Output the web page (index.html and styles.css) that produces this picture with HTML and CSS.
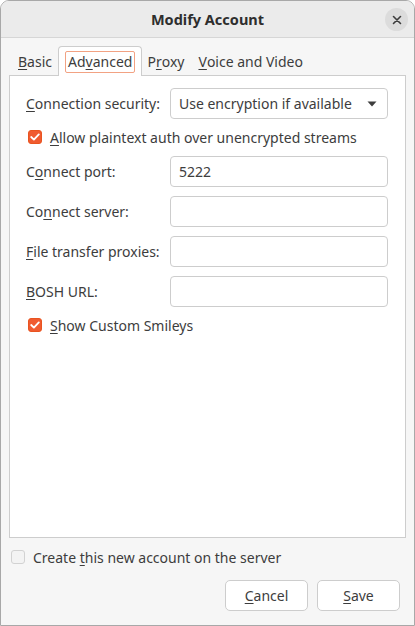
FILE: index.html
```html
<!DOCTYPE html>
<html lang="en">
<head>
    <meta charset="UTF-8">
    <meta name="viewport" content="width=device-width, initial-scale=1.0">
    <title>Modify Account</title>
    <link rel="stylesheet" href="styles.css">
</head>
<body>
    <div class="window">
        <div class="titlebar">
            <span class="title">Modify Account</span>
            <button class="close" aria-label="Close">
                <svg width="10" height="10" viewBox="0 0 10 10"><path d="M1.5 1.5 L8.5 8.5 M8.5 1.5 L1.5 8.5" stroke="#3d3d3d" stroke-width="1.6" stroke-linecap="round"/></svg>
            </button>
        </div>

        <div class="content">
            <div class="tabs">
                <div class="tab"><u>B</u>asic</div>
                <div class="tab active"><span class="focus">Ad<u>v</u>anced</span></div>
                <div class="tab">P<u>r</u>oxy</div>
                <div class="tab"><u>V</u>oice and Video</div>
            </div>

            <div class="page">
                <div class="form">
                    <label><u>C</u>onnection security:</label>
                    <div class="combo">
                        <span>Use encryption if available</span>
                        <svg width="10" height="6" viewBox="0 0 10 6"><path d="M0.5 0.5 H9.5 L5 5.5 Z" fill="#3d3d3d"/></svg>
                    </div>

                    <div class="check-row">
                        <span class="check on"><svg width="10" height="8" viewBox="0 0 10 8"><path d="M1.2 4 L3.9 6.6 L8.8 1.4" fill="none" stroke="#fff" stroke-width="1.8" stroke-linecap="round" stroke-linejoin="round"/></svg></span>
                        <span><u>A</u>llow plaintext auth over unencrypted streams</span>
                    </div>

                    <label>C<u>o</u>nnect port:</label>
                    <div class="entry">5222</div>

                    <label>Co<u>n</u>nect server:</label>
                    <div class="entry"></div>

                    <label><u>F</u>ile transfer proxies:</label>
                    <div class="entry"></div>

                    <label><u>B</u>OSH URL:</label>
                    <div class="entry"></div>

                    <div class="check-row">
                        <span class="check on"><svg width="10" height="8" viewBox="0 0 10 8"><path d="M1.2 4 L3.9 6.6 L8.8 1.4" fill="none" stroke="#fff" stroke-width="1.8" stroke-linecap="round" stroke-linejoin="round"/></svg></span>
                        <span><u>S</u>how Custom Smileys</span>
                    </div>
                </div>
            </div>

            <div class="create-row">
                <span class="check"></span>
                <span>Create <u>t</u>his new account on the server</span>
            </div>

            <div class="buttons">
                <button class="btn"><u>C</u>ancel</button>
                <button class="btn"><u>S</u>ave</button>
            </div>
        </div>
    </div>
</body>
</html>
```

FILE: styles.css
```css
body {
    margin: 0;
    font-family: "Noto Sans", "Open Sans", sans-serif;
    font-size: 14px;
    color: #3d3d3d;
    background: #ffffff;
}
u {
    text-decoration-thickness: 1px;
    text-underline-offset: 2px;
}
.window {
    width: 415px;
    height: 626px;
    box-sizing: border-box;
    border: 1px solid #a8a8a8;
    border-radius: 9px 9px 0 0;
    background: #f6f6f6;
    display: flex;
    flex-direction: column;
    overflow: hidden;
}
.titlebar {
    height: 36px;
    flex: none;
    background: #ebebeb;
    border-bottom: 1px solid #d6d6d6;
    display: flex;
    align-items: center;
    justify-content: center;
    position: relative;
}
.title {
    font-weight: bold;
    font-size: 14.5px;
    color: #2e2e2e;
}
.close {
    position: absolute;
    right: 6px;
    top: 7px;
    width: 23px;
    height: 23px;
    border-radius: 50%;
    border: none;
    background: #dcdcdc;
    padding: 0;
    display: flex;
    align-items: center;
    justify-content: center;
}
.content {
    flex: 1;
    display: flex;
    flex-direction: column;
    padding: 8px 13px 14px 8px;
}
.tabs {
    display: flex;
    align-items: flex-end;
    height: 30px;
    padding-left: 1px;
    margin-bottom: -1px;
    position: relative;
}
.tab {
    height: 30px;
    box-sizing: border-box;
    padding: 0 6px 0 8px;
    display: flex;
    align-items: center;
}
.tab.active {
    background: #ffffff;
    border: 1px solid #cdcdcd;
    border-bottom: none;
    border-radius: 4px 4px 0 0;
    padding: 0 6px;
}
.tab.active + .tab {
    padding-left: 5px;
}
.focus {
    border: 1px solid #f2a283;
    border-radius: 2px;
    padding: 2px 2px;
    line-height: 16px;
}
.page {
    flex: 1;
    margin-right: -5px;
    background: #ffffff;
    border: 1px solid #cdcdcd;
    padding: 12px 17px 0 16px;
}
.form {
    display: grid;
    grid-template-columns: 144px 1fr;
    row-gap: 9px;
    align-items: center;
}
.form label {
    white-space: nowrap;
}
.combo, .entry {
    height: 31px;
    box-sizing: border-box;
    border: 1px solid #cdcdcd;
    border-radius: 4px;
    background: #ffffff;
    display: flex;
    align-items: center;
    padding: 0 8px;
}
.combo {
    justify-content: space-between;
    padding-right: 10px;
}
.check-row {
    grid-column: 1 / 3;
    display: flex;
    align-items: center;
    gap: 8px;
    height: 20px;
    margin-top: -1px;
    padding-left: 2px;
}
.check {
    width: 14px;
    height: 14px;
    box-sizing: border-box;
    border-radius: 3px;
    border: 1px solid #d2d2d2;
    background: #f3f3f3;
    display: flex;
    align-items: center;
    justify-content: center;
    flex: none;
}
.check.on {
    background: #f05b30;
    border-color: #e95420;
}
.create-row {
    display: flex;
    align-items: center;
    gap: 8px;
    margin-top: 11px;
    padding-left: 2px;
    height: 16px;
}
.buttons {
    display: flex;
    justify-content: flex-end;
    gap: 9px;
    margin-top: 15px;
    padding-right: 1px;
}
.btn {
    width: 83px;
    height: 31px;
    font: inherit;
    color: #3d3d3d;
    background: #ffffff;
    border: 1px solid #cdcdcd;
    border-radius: 5px;
}
```
